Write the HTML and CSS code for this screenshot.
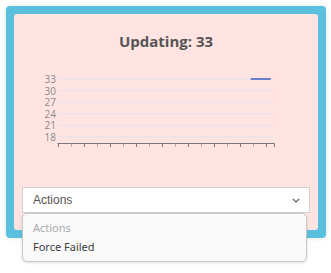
FILE: index.html
```html
<!DOCTYPE html>
<html lang="en">
<head>
    <meta charset="UTF-8">
    <title>Updating</title>
    <link rel="stylesheet" href="styles.css">
</head>
<body>
    <div class="panel">
        <div class="card">
            <h2 class="title">Updating: 33</h2>

            <svg class="chart" width="288" height="86" viewBox="0 0 288 86">
                <g class="grid">
                    <line x1="36" y1="14" x2="252" y2="14"/>
                    <line x1="36" y1="25.6" x2="252" y2="25.6"/>
                    <line x1="36" y1="37.2" x2="252" y2="37.2"/>
                    <line x1="36" y1="48.8" x2="252" y2="48.8"/>
                    <line x1="36" y1="60.4" x2="252" y2="60.4"/>
                    <line x1="36" y1="72" x2="252" y2="72"/>
                </g>
                <g class="labels">
                    <text x="34" y="14">33</text>
                    <text x="34" y="25.6">30</text>
                    <text x="34" y="37.2">27</text>
                    <text x="34" y="48.8">24</text>
                    <text x="34" y="60.4">21</text>
                    <text x="34" y="72">18</text>
                </g>
                <line class="axis" x1="35.5" y1="78.5" x2="252.5" y2="78.5"/>
                <g class="ticks" id="ticks"></g>
                <line class="series" x1="228.7" y1="14" x2="248.7" y2="14"/>
            </svg>

            <div class="select-wrap">
                <div class="select">
                    <span>Actions</span>
                    <svg class="chevron" width="8" height="5" viewBox="0 0 8 5">
                        <path d="M0.8 0.8 L4 4 L7.2 0.8" fill="none" stroke="#555" stroke-width="1.1"/>
                    </svg>
                </div>
                <ul class="menu">
                    <li class="placeholder">Actions</li>
                    <li>Force Failed</li>
                </ul>
            </div>
        </div>
    </div>

    <script>
        // x axis ticks, every 13px
        const ticks = document.getElementById('ticks');
        const xs = [];
        for (let i = 0; i < 17; i++) xs.push(35.7 + i * 13);
        xs.push(252);
        xs.forEach(function (x, i) {
            const t = document.createElementNS('http://www.w3.org/2000/svg', 'line');
            const px = Math.round(x) + 0.5;
            t.setAttribute('x1', px);
            t.setAttribute('x2', px);
            t.setAttribute('y1', 78.5);
            t.setAttribute('y2', 82);
            if (i % 2 === 1 && i !== 17) t.setAttribute('class', 'minor');
            ticks.appendChild(t);
        });
    </script>
</body>
</html>
```

FILE: styles.css
```css
* {
    margin: 0;
    padding: 0;
    box-sizing: border-box;
}

html, body {
    height: 273px;
}

body {
    margin: 0;
    padding: 6px;
    background: #fff;
    font-family: "Open Sans", "Noto Sans", sans-serif;
}

.panel {
    width: 320px;
    height: 232px;
    padding: 8px;
    background-color: #5bc0de;
    border-radius: 4px;
    box-shadow: 0 0 5px rgba(0, 0, 0, 0.12);
}

.card {
    height: 216px;
    padding: 17px 8px 17px;
    background-color: #ffe4e1;
    border-radius: 3px;
    display: flex;
    flex-direction: column;
}

.title {
    font-size: 15px;
    line-height: 20px;
    font-weight: 700;
    color: #555;
    text-align: center;
}

.chart {
    display: block;
    margin-top: 14px;
}

.grid line {
    stroke: #e4e2f0;
    stroke-width: 1;
}

.labels text {
    font-family: "Open Sans", "Noto Sans", sans-serif;
    font-size: 10px;
    fill: #8a8a8a;
    text-anchor: end;
    dominant-baseline: central;
}

.axis {
    stroke: #777;
    stroke-width: 1;
}

.ticks line {
    stroke: #777;
    stroke-width: 1;
}

.ticks line.minor {
    stroke: #b5aaaa;
}

.series {
    stroke: #6a7ccc;
    stroke-width: 2;
}

.select-wrap {
    position: relative;
    margin-top: auto;
}

.select {
    height: 26px;
    padding: 0 9px 0 10px;
    background: #fff;
    border: 1px solid #d0d0d0;
    display: flex;
    align-items: center;
    justify-content: space-between;
    font-family: "Liberation Sans", Arial, sans-serif;
    font-size: 12px;
    color: #555;
}

.chevron {
    display: block;
}

.menu {
    position: absolute;
    top: 26px;
    left: 0;
    width: 285px;
    list-style: none;
    padding: 4px 0 5px;
    background: #fafafa;
    border: 1px solid #c8c8c8;
    border-radius: 5px;
    box-shadow: 0 1px 3px rgba(0, 0, 0, 0.12);
    font-family: "Noto Sans", "Open Sans", sans-serif;
    font-size: 11px;
    color: #3c3c3c;
}

.menu li {
    height: 19px;
    line-height: 19px;
    padding-left: 10px;
}

.menu .placeholder {
    color: #aaa;
}
```
